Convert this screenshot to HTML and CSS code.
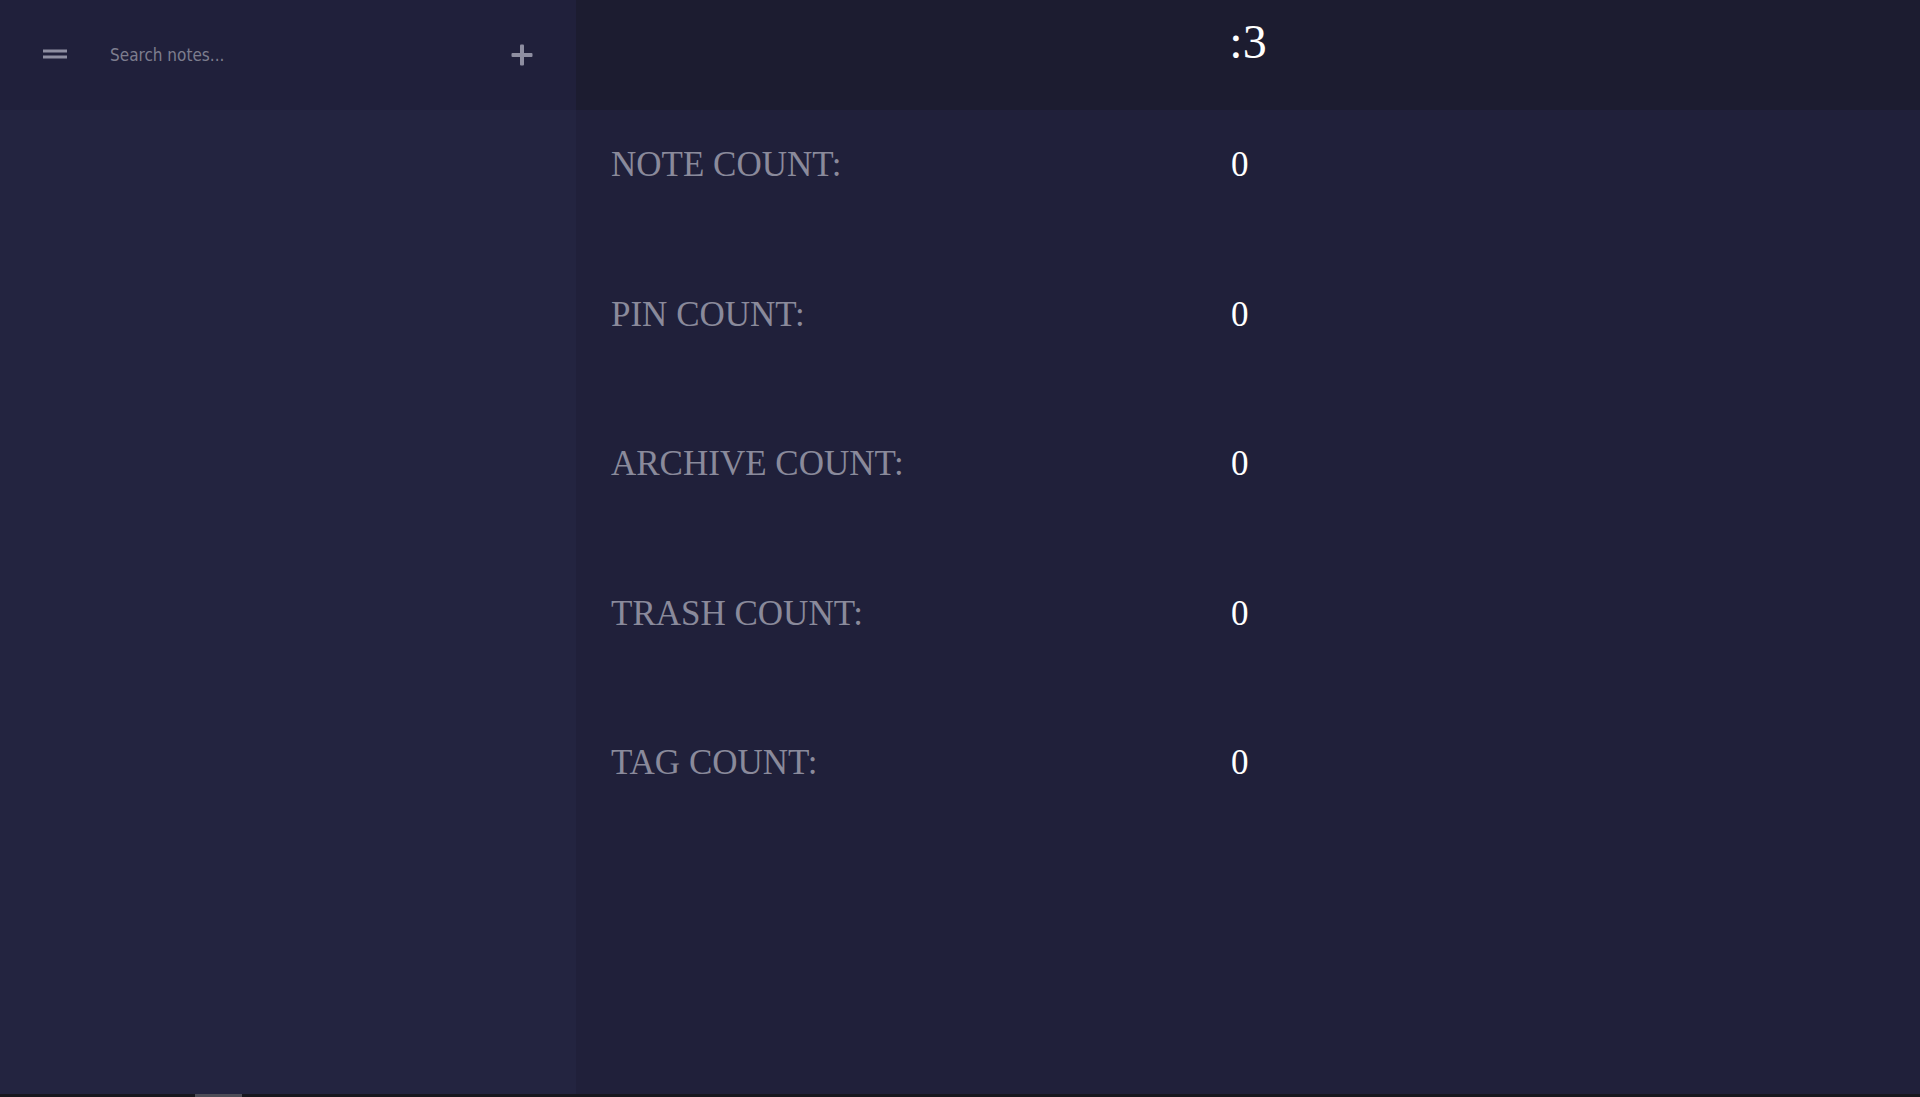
FILE: index.html
```html
<!DOCTYPE html>
<html lang="en">
<head>
<meta charset="utf-8">
<title>Notes</title>
<link rel="stylesheet" href="styles.css">
</head>
<body>
<div class="app">
  <aside class="sidebar">
    <div class="side-header">
      <button class="icon-btn menu-btn" aria-label="Menu">
        <svg width="24" height="12" viewBox="0 0 24 12"><rect x="0" y="0.5" width="24" height="3" fill="#8e8ea1"/><rect x="0" y="6.5" width="24" height="3" fill="#8e8ea1"/></svg>
      </button>
      <input class="search" type="text" placeholder="Search notes...">
      <button class="icon-btn add-btn" aria-label="New note">
        <svg width="22" height="22" viewBox="0 0 22 22"><rect x="9" y="0.5" width="4" height="21" rx="1" fill="#8e8ea1"/><rect x="0.5" y="9" width="21" height="4" rx="1" fill="#8e8ea1"/></svg>
      </button>
    </div>
    <div class="side-body"></div>
  </aside>
  <main class="main">
    <header class="main-header">
      <h1 class="title">:3</h1>
    </header>
    <section class="stats">
      <div class="label">NOTE COUNT:</div><div class="value">0</div>
      <div class="label">PIN COUNT:</div><div class="value">0</div>
      <div class="label">ARCHIVE COUNT:</div><div class="value">0</div>
      <div class="label">TRASH COUNT:</div><div class="value">0</div>
      <div class="label">TAG COUNT:</div><div class="value">0</div>
    </section>
  </main>
</div>
<div class="hscroll"><div class="thumb"></div></div>
</body>
</html>
```
FILE: styles.css
```css
* { box-sizing: border-box; }
html, body { margin: 0; padding: 0; height: 100%; }
body {
  display: flex;
  flex-direction: column;
  height: 100vh;
  overflow: hidden;
  background: #20203a;
  font-family: "Liberation Serif", "Times New Roman", serif;
}
.app {
  flex: 1;
  display: flex;
  min-height: 0;
}
.sidebar {
  width: 576px;
  flex: none;
  display: flex;
  flex-direction: column;
  background: #232440;
}
.side-header {
  height: 110px;
  flex: none;
  display: flex;
  align-items: center;
  padding: 0 43px 0 43px;
  background: #20203b;
}
.icon-btn {
  background: none;
  border: 0;
  padding: 0;
  margin: 0;
  display: flex;
  align-items: center;
  justify-content: center;
  cursor: pointer;
}
.menu-btn { width: 24px; height: 12px; }
.search {
  flex: 1;
  margin-left: 43px;
  background: transparent;
  border: 0;
  outline: none;
  color: #c9c9d6;
  font-family: "DejaVu Sans Condensed", "DejaVu Sans", sans-serif;
  font-size: 17px;
  padding: 0;
  height: 24px;
}
.search::placeholder { color: #7d7d8e; }
.add-btn { width: 22px; height: 22px; }
.side-body { flex: 1; }
.main {
  flex: 1;
  display: flex;
  flex-direction: column;
  background: #20203a;
}
.main-header {
  height: 110px;
  flex: none;
  background: #1c1c30;
  padding-top: 18px;
}
.title {
  margin: 0;
  text-align: center;
  font-weight: normal;
  font-size: 48px;
  line-height: 48px;
  color: #ffffff;
}
.stats {
  display: grid;
  grid-template-columns: 620px auto;
  row-gap: 109.5px;
  padding: 35px 35px 0 35px;
  font-size: 35px;
  line-height: 40px;
}
.label { color: #8a8a9b; }
.value { color: #ffffff; }
.hscroll {
  height: 3px;
  flex: none;
  background: #17171e;
  display: flex;
}
.thumb {
  margin-left: 195px;
  width: 47px;
  background: #4d4d57;
}
```
